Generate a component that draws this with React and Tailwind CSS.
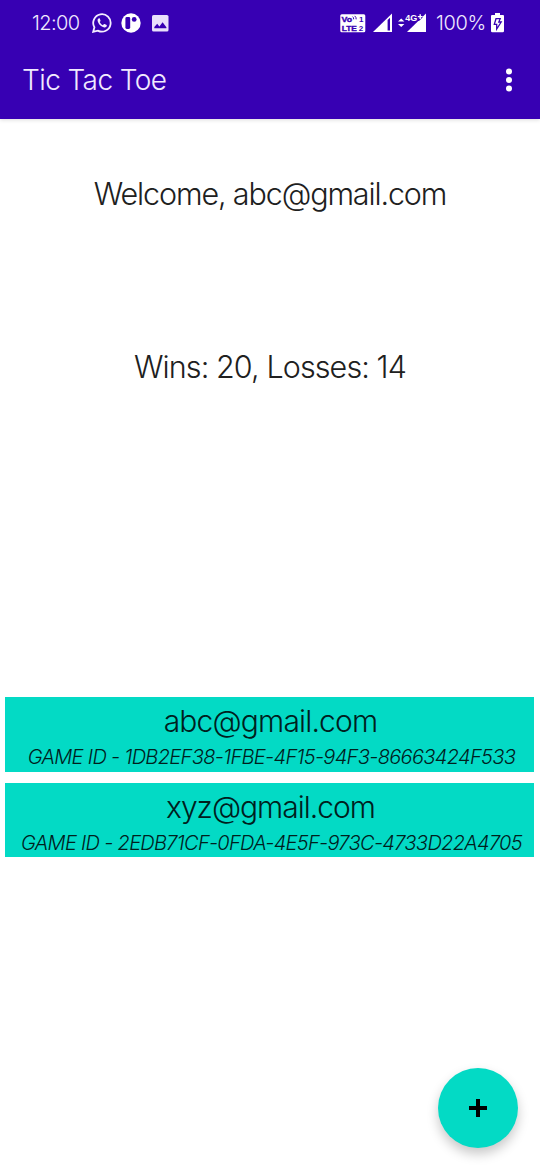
const games = [
  { player: 'abc@gmail.com', id: '1DB2EF38-1FBE-4F15-94F3-86663424F533', boxCls: 'h-[75px]', nameCls: 'tracking-[-0.83px]', idCls: 'tracking-[-0.66px]' },
  { player: 'xyz@gmail.com', id: '2EDB71CF-0FDA-4E5F-973C-4733D22A4705', boxCls: 'h-[74px]', nameCls: 'tracking-[-1px]', idCls: 'tracking-[-0.69px]' },
];

function WhatsAppIcon() {
  return (
    <svg className="ml-[11px] h-5 w-5" viewBox="0 0 20 20" fill="none">
      <path d="M1.2 18.8 2.4 14.3A8.7 8.7 0 1 1 5.8 17.6Z" stroke="#f4eeff" strokeWidth="1.8" />
      <path d="M6.9 5.2C6 5.6 5.4 6.5 5.6 7.6c.5 3.3 3.3 6.2 6.7 6.9 1.2.2 2.3-.6 2.5-1.7l-.1-.7-2.2-1.1-.6.1-.9 1.1c-1.5-.6-2.6-1.7-3.3-3.2l.9-1.1L7.7 5.3Z" fill="#f4eeff" />
    </svg>
  );
}

function NewsIcon() {
  return (
    <svg className="ml-[9px] h-5 w-5" viewBox="0 0 20 20">
      <circle cx="10" cy="10" r="9.7" fill="#fff" />
      <rect x="4.4" y="4" width="4.8" height="12" rx="1.4" fill="#3700b3" />
      <circle cx="13.2" cy="6.4" r="2.4" fill="#3700b3" />
    </svg>
  );
}

function PictureIcon() {
  return (
    <svg className="ml-[11px] h-[17px] w-[17px]" viewBox="0 0 17 17">
      <rect width="16.5" height="16.5" rx="1.6" fill="#e9e0fb" />
      <path d="M2.3 13.2V12L5.2 8.8l2.2 2.6 3.2-4.2 3.8 5V13.2Z" fill="#3700b3" />
    </svg>
  );
}

function VolteIcon() {
  return (
    <svg className="h-[19px] w-[26px]" viewBox="0 0 26 19" fontFamily="Liberation Sans, sans-serif" fontWeight="700">
      <rect x=".3" y=".3" width="25" height="18" rx="1.5" fill="#fff" />
      <g fill="#3700b3" stroke="#3700b3" strokeWidth=".4">
        <text x="1.5" y="7.8" fontSize="8" textLength="10.5" lengthAdjust="spacingAndGlyphs">Vo</text>
        <text x="1.8" y="17" fontSize="8" textLength="15" lengthAdjust="spacingAndGlyphs">LTE</text>
        <text x="19" y="7.8" fontSize="8" strokeWidth="0">1</text>
        <text x="18.7" y="17" fontSize="8" strokeWidth="0">2</text>
      </g>
      <path d="M12.5 2.6q1.3.8 1.2 2.7M14.7 1.9q1.6 1.3 1.5 3.4" stroke="#3700b3" fill="none" />
    </svg>
  );
}

function SignalIcons() {
  return (
    <svg className="ml-[6px] h-5 w-[55px]" viewBox="0 0 55 20">
      <path d="M1 19 20 .5V19Z" fill="#fff" />
      <path d="M15.6 7 18 4.7V17.5H15.6Z" fill="#3700b3" />
      <path d="M26 8.6 29.2 5.5 32.4 8.6ZM26 11 29.2 14.1 32.4 11Z" fill="#fff" />
      <path d="M35 19 54 .5V19Z" fill="#fff" />
      <path d="M33 0H50.5V4.5L47 8H33Z" fill="#3700b3" />
      <text x="33.3" y="7.6" fontSize="9" fontWeight="700" fontFamily="Liberation Sans, sans-serif" fill="#fff">4G</text>
      <path d="M48.2 1.2V6M45.8 3.6H50.6" stroke="#fff" strokeWidth="1.4" />
    </svg>
  );
}

function BatteryIcon() {
  return (
    <svg className="ml-[6px] h-[20px] w-[13px]" viewBox="0 0 13 20">
      <path d="M4 0H9V2H12A1 1 0 0 1 13 3V18A1.3 1.3 0 0 1 11.7 19.3H1.3A1.3 1.3 0 0 1 0 18V3A1 1 0 0 1 1 2H4Z" fill="#fff" />
      <path d="M5 5.7H9.2L7.8 9H10.2L5.7 16V11.4H3.3Z" fill="none" stroke="#3700b3" strokeWidth="1.3" />
    </svg>
  );
}

export default function App() {
  return (
    <div className="flex h-[1170px] w-[540px] flex-col overflow-hidden bg-white font-['Inter',sans-serif] font-light text-[#202020]">
      <header className="h-[119px] shrink-0 bg-[#3700b3] text-[#f1eaff] shadow-[0_1px_4px_rgba(0,0,0,0.14)]">
        <div className="flex h-[46px] items-center pl-[32px] pr-[36px]">
          <span className="w-[49px] whitespace-nowrap text-[20px] leading-6 tracking-[-0.6px]">12:00</span>
          <WhatsAppIcon />
          <NewsIcon />
          <PictureIcon />
          <span className="flex-1" />
          <VolteIcon />
          <SignalIcons />
          <span className="ml-[9px] w-[49px] whitespace-nowrap text-[20px] leading-6 tracking-[-0.4px]">100%</span>
          <BatteryIcon />
        </div>
        <div className="flex h-[67px] items-center justify-between pl-[22px] pr-[28px]">
          <h1 className="text-[28px] leading-9 tracking-[-0.6px]">Tic Tac Toe</h1>
          <svg className="h-6 w-[6px]" viewBox="0 0 6 24" fill="#fff">
            <circle cx="3" cy="3.5" r="3" />
            <circle cx="3" cy="12" r="3" />
            <circle cx="3" cy="20.5" r="3" />
          </svg>
        </div>
      </header>
      <main className="flex flex-1 flex-col">
        <p className="mt-[55px] text-center text-[30.5px] leading-10 tracking-[-1.13px]">Welcome, abc@gmail.com</p>
        <p className="mt-[133px] text-center text-[30.5px] leading-10 tracking-[-0.9px]">Wins: 20, Losses: 14</p>
        <div className="mt-[310px] flex flex-col gap-[11px] pl-[5px] pr-[6px] text-[#00201d]">
          {games.map((g) => (
            <section key={g.id} className={`flex flex-col items-center bg-[#03dac5] ${g.boxCls}`}>
              <p className={`mt-[4px] pl-[2px] text-[30px] leading-10 whitespace-nowrap ${g.nameCls}`}>{g.player}</p>
              <p className={`mt-[4px] pl-[4px] text-[20px] italic leading-6 whitespace-nowrap ${g.idCls}`}>GAME ID - {g.id}</p>
            </section>
          ))}
        </div>
        <button aria-label="New game" className="mt-auto mr-[22px] mb-[22px] flex h-[80px] w-[80px] items-center justify-center self-end rounded-full bg-[#03dac5] shadow-[0_6px_12px_rgba(0,0,0,0.22)]">
          <svg className="h-[20px] w-[20px]" viewBox="0 0 20 20">
            <path d="M10 1V19M1 10H19" stroke="#000" strokeWidth="4" strokeLinejoin="round" />
          </svg>
        </button>
      </main>
    </div>
  );
}
